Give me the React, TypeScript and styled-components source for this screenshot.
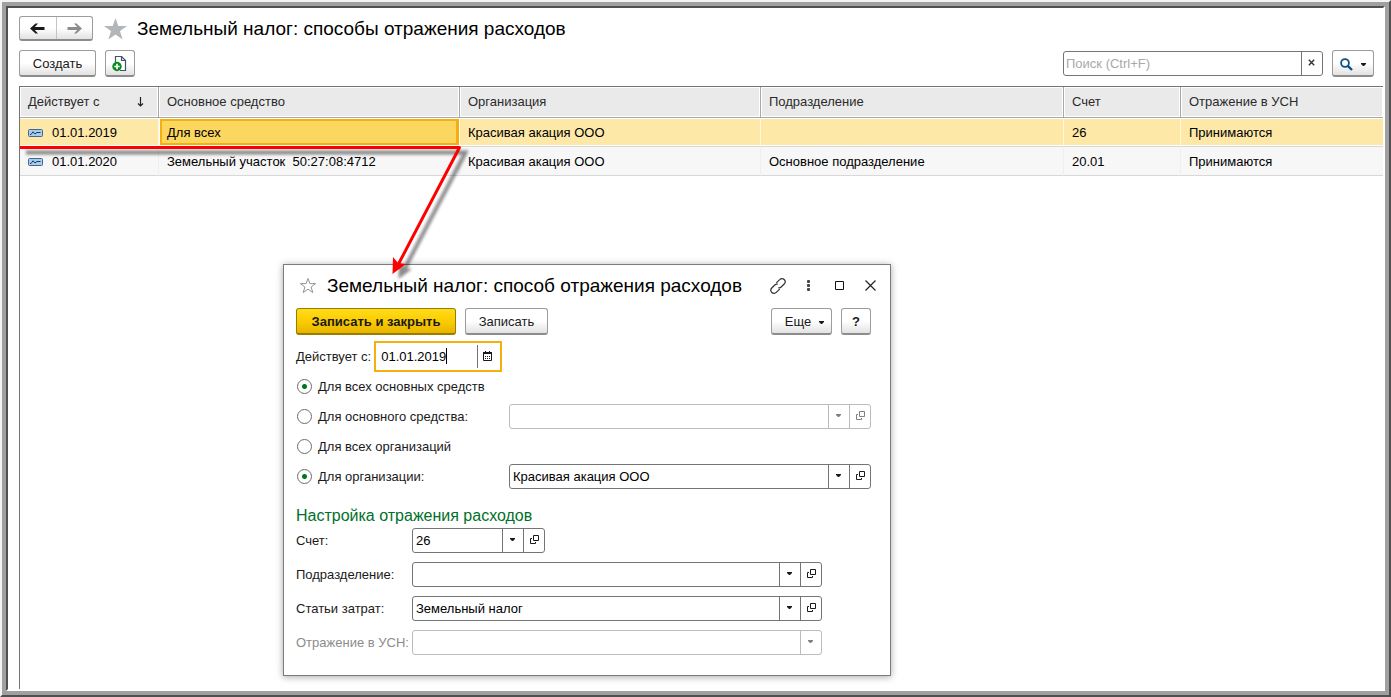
import React, { useState } from "react";
import styled, { createGlobalStyle, css } from "styled-components";

const GlobalStyle = createGlobalStyle`
  *, *::before, *::after { box-sizing: border-box; }
  body { margin: 0; background: #ffffff; }
  body, button, input, table {
    font-family: "Liberation Sans", Arial, sans-serif;
    font-size: 13px;
    line-height: 16px;
    color: #1a1a1a;
  }
  svg { display: block; flex: none; }
`;

/* ---------- window frame ---------- */

const OuterFrame = styled.div`
  min-height: 100vh;
  display: flex;
  border: 2px solid;
  border-color: #f4f4f4 #505050 #505050 #f4f4f4;
`;

const MiddleFrame = styled.div`
  flex: 1;
  min-width: 0;
  display: flex;
  border: 4px solid #a0a0a0;
`;

const Page = styled.main`
  position: relative;
  flex: 1;
  min-width: 0;
  display: flex;
  flex-direction: column;
  padding: 8px 0 0 11px;
  border: 2px solid;
  border-color: #505050 #ffffff #ffffff #505050;
`;

/* ---------- shared controls ---------- */

const Button = styled.button<{
  $width?: number;
  $primary?: boolean;
  $bold?: boolean;
  $menu?: boolean;
}>`
  height: 27px;
  width: ${(p) => (p.$width ? `${p.$width}px` : "auto")};
  flex: none;
  display: flex;
  align-items: center;
  justify-content: center;
  gap: 8px;
  padding: ${(p) => (p.$menu ? "2px 0 0 6px" : "2px 0 0")};
  border: 1px solid #9c9c9c;
  border-bottom: 2px solid #8c8c8c;
  border-radius: 3px;
  background: linear-gradient(#ffffff 50%, #e2e2e2);
  font-weight: ${(p) => (p.$primary || p.$bold ? "bold" : "normal")};
  white-space: nowrap;
  ${(p) =>
    p.$primary &&
    css`
      border-color: #9a7d00;
      background: linear-gradient(#ffdc1c, #fccc00 50%, #e6b400);
    `}
`;

const IconButton = styled.button`
  display: flex;
  align-items: center;
  justify-content: center;
  width: 31px;
  height: 24px;
  padding: 0;
  border: 0;
  background: none;
`;

/* ---------- list form ---------- */

const TitleRow = styled.header`
  display: flex;
  align-items: center;
  height: 25px;
`;

const History = styled.nav`
  display: flex;
  width: 74px;
  height: 25px;
  border: 1px solid #9c9c9c;
  border-bottom: 2px solid #8c8c8c;
  border-radius: 3px;
  background: linear-gradient(#ffffff 50%, #e2e2e2);
`;

const HistoryButton = styled.button`
  flex: 1;
  display: flex;
  align-items: center;
  justify-content: center;
  padding: 0;
  border: 0;
  background: none;

  & + & {
    border-left: 1px solid #c4c4c4;
  }
`;

const FavoriteButton = styled.button`
  display: flex;
  padding: 0;
  border: 0;
  margin: 0 10px 0 11px;
  background: none;
`;

const Heading = styled.h1`
  margin: 0;
  font-size: 19px;
  line-height: 24px;
  font-weight: normal;
  color: #000000;
  white-space: nowrap;
`;

const Toolbar = styled.div`
  display: flex;
  align-items: center;
  gap: 9px;
  padding: 9px 9px 9px 0;
`;

const SearchBox = styled.div`
  display: flex;
  width: 260px;
  height: 25px;
  margin-left: auto;
  border: 1px solid #747474;
  border-radius: 3px;
  background: #ffffff;
`;

const SearchInput = styled.input`
  flex: 1;
  min-width: 0;
  padding: 0 2px;
  border: 0;
  background: none;
  outline: 0;

  &::placeholder {
    color: #a8a8a8;
    opacity: 1;
  }
`;

const ClearButton = styled.button`
  display: flex;
  align-items: center;
  justify-content: center;
  width: 21px;
  padding: 0 1px 2px 0;
  border: 0;
  border-left: 1px solid #747474;
  background: none;
`;

const TableArea = styled.section`
  flex: 1;
  border-top: 1px solid #747474;
  border-left: 1px solid #747474;
`;

const Table = styled.table`
  width: 100%;
  table-layout: fixed;
  border-collapse: separate;
  border-spacing: 0;
`;

const HeadCell = styled.th`
  height: 31px;
  padding: 0 8px;
  border-right: 1px solid #a8a8a8;
  border-bottom: 1px solid #a8a8a8;
  background: #eaeaea;
  box-shadow: inset 0 0 0 1px #ffffff;
  font-weight: normal;
  text-align: left;
  white-space: nowrap;
  color: #2a2a2a;

  &:last-child {
    border-right: 0;
  }
`;

const Sortable = styled.div`
  display: flex;
  align-items: center;
  justify-content: space-between;
  padding-right: 6px;
`;

const Row = styled.tr<{ $selected?: boolean }>`
  background: ${(p) => (p.$selected ? "#fde8a8" : "#f7f7f7")};
`;

const Cell = styled.td<{ $active?: boolean; $selected?: boolean }>`
  height: 29px;
  padding: 2px 8px 0;
  border-right: 1px solid ${(p) => (p.$selected ? "#fff6dc" : "#efefef")};
  border-bottom: 1px solid #d8d8d8;
  white-space: pre;
  color: #000000;
  ${(p) => p.$selected && "box-shadow: inset 0 1px 0 #ffffff, inset 0 -1px 0 #ffffff;"}
  ${(p) =>
    p.$active &&
    css`
      background: #fcd75f;
      border-right-color: #ffffff;
      box-shadow: inset 0 1px 0 #ffffff, inset 0 -1px 0 #ffffff, inset 1px 0 0 #ffffff,
        inset 0 0 0 3px #f5b010;
    `}

  &:last-child {
    border-right: 0;
  }
`;

const DateValue = styled.div`
  display: flex;
  align-items: center;
  gap: 9px;
`;

/* ---------- dialog ---------- */

const Dialog = styled.section`
  position: absolute;
  left: 275px;
  top: 256px;
  width: 608px;
  padding: 0 19px 20px 12px;
  border: 1px solid #7c7c7c;
  background: #ffffff;
  box-shadow: 0 1px 7px rgba(0, 0, 0, 0.35);
`;

const DialogTitleRow = styled.header`
  display: flex;
  align-items: center;
  height: 43px;
  padding: 0 0 2px 3px;
`;

const DialogTitle = styled(Heading).attrs({ as: "h2" })`
  flex: 1;
`;

const StarButton = styled(FavoriteButton)`
  margin: 0 10px 0 0;
`;

const WindowButtons = styled.div`
  display: flex;
  margin-right: -15px;
`;

const Commands = styled.div`
  display: flex;
  gap: 9px;
  margin-bottom: 6px;
`;

const Spacer = styled.span`
  flex: 1;
`;

const DateRow = styled.div`
  display: flex;
  align-items: center;
  gap: 3px;
  margin-bottom: 2px;
`;

const DateField = styled.div`
  position: relative;
  display: flex;
  align-items: center;
  width: 128px;
  height: 31px;
  border: 2px solid #f5b010;
`;

const DateInput = styled.input`
  width: 102px;
  height: 23px;
  padding: 0 0 0 5px;
  border: 0;
  border-right: 1px solid #747474;
  outline: 0;
  background: none;
  color: #000000;
`;

const TextCursor = styled.span`
  position: absolute;
  left: 70px;
  top: 5px;
  width: 1px;
  height: 16px;
  background: #000000;
`;

const CalendarButton = styled.button`
  display: flex;
  padding: 0 0 2px 5px;
  border: 0;
  background: none;
`;

const Options = styled.div`
  display: grid;
  gap: 5px;
`;

const OptionRow = styled.div`
  display: grid;
  grid-template-columns: 213px 1fr;
  align-items: center;
  height: 25px;
`;

const OptionLabel = styled.label`
  display: flex;
  align-items: center;
  gap: 5px;
  white-space: nowrap;
`;

const Radio = styled.input.attrs({ type: "radio" })`
  appearance: none;
  width: 15px;
  height: 15px;
  margin: 0 1px;
  border: 1px solid #6c6c6c;
  border-radius: 50%;
  background: #ffffff;

  &:checked {
    background: radial-gradient(circle, #007420 0 2px, #ffffff 3px);
  }
`;

const GroupTitle = styled.h3`
  margin: 15px 0 0;
  font-size: 16px;
  line-height: 24px;
  font-weight: normal;
  color: #00702a;
`;

const Fields = styled.div`
  display: grid;
  gap: 9px;
`;

const FieldRow = styled.div<{ $disabled?: boolean }>`
  display: grid;
  grid-template-columns: 116px auto;
  justify-content: start;
  align-items: center;
  white-space: nowrap;
  color: ${(p) => (p.$disabled ? "#8c8c8c" : "#1a1a1a")};
`;

const ComboBox = styled.div<{ $width?: number; $disabled?: boolean }>`
  display: flex;
  width: ${(p) => (p.$width ? `${p.$width}px` : "100%")};
  height: 25px;
  border: 1px solid ${(p) => (p.$disabled ? "#bcbcbc" : "#747474")};
  border-radius: 3px;
  color: ${(p) => (p.$disabled ? "#808080" : "#1a1a1a")};
`;

const ComboInput = styled.input`
  flex: 1;
  min-width: 0;
  padding: 0 3px;
  border: 0;
  outline: 0;
  background: none;
  color: #000000;
`;

const ComboButton = styled.button<{ $disabled?: boolean }>`
  display: flex;
  align-items: center;
  justify-content: center;
  width: 21px;
  padding: 0 1px 2px 0;
  border: 0;
  border-left: 1px solid ${(p) => (p.$disabled ? "#bcbcbc" : "#747474")};
  background: none;
  color: inherit;
`;

const OpenButton = styled(ComboButton)`
  padding: 0 0 2px 1px;
`;

const Pointer = styled.svg`
  position: absolute;
  left: 0;
  top: 0;
  pointer-events: none;
`;

/* ---------- icons ---------- */

const BackArrow = ({ color }: { color: string }) => (
  <svg width="15" height="11" viewBox="0 0 15 11" fill={color}>
    <path d="M0 5.500L5.500 .5H8L4.800 4H14.500V7H4.800L8 10.500H5.500Z" />
  </svg>
);

const ForwardArrow = ({ color }: { color: string }) => (
  <svg width="15" height="11" viewBox="0 0 15 11" fill={color}>
    <path d="M15 5.500L9.500 .5H7L10.200 4H.5V7H10.200L7 10.500H9.500Z" />
  </svg>
);

const SolidStar = () => (
  <svg width="23" height="22" viewBox="0 0 23 22" fill="#b3b6b9">
    <path d="M11.5 0L14.3 8H23L16 13.1L18.6 21.6L11.5 16.5L4.4 21.6L7 13.1L0 8H8.7Z" />
  </svg>
);

const OutlineStar = () => (
  <svg width="18" height="17" viewBox="0 0 18 17" fill="none" stroke="#8f949a">
    <path d="M9 1.500L10.9 6.600H16.6L12.1 10L13.8 15.500L9 12.200L4.2 15.500L5.9 10L1.4 6.600H7.1Z" />
  </svg>
);

const NewDocument = () => (
  <svg width="16" height="16" viewBox="0 0 16 16" fill="none">
    <path d="M3.500 7V.5H9.500L13.500 4.500V14.500H8" fill="#fff" stroke="#3f5468" strokeWidth="1.200" />
    <path d="M9.500 .5V4.500H13.500" stroke="#3f5468" strokeWidth="1.200" />
    <circle cx="5" cy="10.500" r="4.700" fill="#0b8a1c" />
    <path d="M5 7.800V13.200M2.300 10.500H7.700" stroke="#fff" strokeWidth="1.600" />
  </svg>
);

const Magnifier = () => (
  <svg width="13" height="13" viewBox="0 0 13 13" fill="none" stroke="#0d4f8b">
    <circle cx="5" cy="5" r="3.900" strokeWidth="1.800" />
    <path d="M7.800 7.800L12 12" strokeWidth="2.400" />
  </svg>
);

const Caret = () => (
  <svg width="5" height="3" viewBox="0 0 5 3" fill="currentColor">
    <path d="M0 0H5V1L3 3H2L0 1Z" />
  </svg>
);

const OpenIcon = () => (
  <svg width="9" height="9" viewBox="0 0 9 9" fill="none" stroke="currentColor">
    <path d="M3.500 .5H8.500V5.500H3.500Z" />
    <path d="M2 3.500H.5V8.500H5.500V7" />
  </svg>
);

const SmallCross = () => (
  <svg width="7" height="7" viewBox="0 0 7 7" stroke="#333" strokeWidth="1.400">
    <path d="M.8 .8L6.200 6.200M6.200 .8L.8 6.200" />
  </svg>
);

const SortArrow = () => (
  <svg width="7" height="10" viewBox="0 0 7 10" fill="none" stroke="#222" strokeWidth="1.200">
    <path d="M3.500 0V9M1 6.500L3.500 9L6 6.500" />
  </svg>
);

const RecordIcon = () => (
  <svg width="15" height="8" viewBox="0 0 15 8" fill="none">
    <rect x=".5" y=".5" width="14" height="7" rx="1" fill="#a8cbee" stroke="#44678c" />
    <path d="M2 5.500H3L5 2.800L7 5L9 3.500H12.500" stroke="#173b66" />
  </svg>
);

const CalendarIcon = () => (
  <svg width="9" height="10" viewBox="0 0 9 10" fill="none">
    <path d="M0 1H9V3H0Z" fill="#1a1a1a" />
    <path d="M.5 3V9.500H8.500V3" stroke="#1a1a1a" />
    <path d="M2.500 0V2M6.500 0V2" stroke="#1a1a1a" />
    <path d="M2 5.500H7M2 7.500H7" stroke="#1a1a1a" strokeDasharray="1 1" />
  </svg>
);

const LinkIcon = () => (
  <svg width="16" height="16" viewBox="0 0 16 16" fill="none" stroke="#333" strokeWidth="1.200" strokeLinecap="round">
    <path d="M6.600 4.600L9.700 1.600A2.900 2.900 0 0 1 14.200 6L11.200 9A2.900 2.900 0 0 1 8.600 9.800" />
    <path d="M9.400 11.400L6.300 14.400A2.900 2.900 0 0 1 1.800 10L4.800 7A2.900 2.900 0 0 1 7.400 6.200" />
  </svg>
);

const DotsIcon = () => (
  <svg width="3" height="11" viewBox="0 0 3 11" fill="#444">
    <rect width="3" height="3" rx="1" />
    <rect y="4" width="3" height="3" rx="1" />
    <rect y="8" width="3" height="3" rx="1" />
  </svg>
);

const MaximizeIcon = () => (
  <svg width="9" height="9" viewBox="0 0 9 9" fill="none" stroke="#111">
    <path d="M.5 .5H8.500V8.500H.5Z" />
  </svg>
);

const CloseIcon = () => (
  <svg width="11" height="11" viewBox="0 0 11 11" stroke="#222" strokeWidth="1.200">
    <path d="M.5 .5L10.500 10.500M10.500 .5L.5 10.500" />
  </svg>
);

/* ---------- composed parts ---------- */

type ComboProps = {
  id?: string;
  label?: string;
  value: string;
  width?: number;
  disabled?: boolean;
  openable?: boolean;
};

function Combo({ id, label, value, width, disabled, openable = true }: ComboProps) {
  return (
    <ComboBox $width={width} $disabled={disabled}>
      <ComboInput id={id} aria-label={label} defaultValue={value} disabled={disabled} />
      <ComboButton type="button" aria-label="Выбрать" $disabled={disabled} disabled={disabled}>
        <Caret />
      </ComboButton>
      {openable && (
        <OpenButton type="button" aria-label="Открыть" $disabled={disabled} disabled={disabled}>
          <OpenIcon />
        </OpenButton>
      )}
    </ComboBox>
  );
}

const columns = [
  { title: "Действует с", width: 139 },
  { title: "Основное средство", width: 301 },
  { title: "Организация", width: 301 },
  { title: "Подразделение", width: 303 },
  { title: "Счет", width: 117 },
  { title: "Отражение в УСН" },
];

const records = [
  ["01.01.2019", "Для всех", "Красивая акация ООО", "", "26", "Принимаются"],
  [
    "01.01.2020",
    "Земельный участок  50:27:08:4712",
    "Красивая акация ООО",
    "Основное подразделение",
    "20.01",
    "Принимаются",
  ],
];

const settings = [
  { id: "account", label: "Счет:", value: "26", width: 133 },
  { id: "department", label: "Подразделение:", value: "", width: 410 },
  { id: "cost", label: "Статьи затрат:", value: "Земельный налог", width: 410 },
  { id: "usn", label: "Отражение в УСН:", value: "", width: 410, disabled: true, openable: false },
];

function RecordDialog() {
  const [asset, setAsset] = useState("all");
  const [company, setCompany] = useState("one");
  return (
    <Dialog role="dialog" aria-labelledby="dialog-title">
      <DialogTitleRow>
        <StarButton type="button" aria-label="В избранное">
          <OutlineStar />
        </StarButton>
        <DialogTitle id="dialog-title">Земельный налог: способ отражения расходов</DialogTitle>
        <WindowButtons>
          <IconButton type="button" aria-label="Ссылка"><LinkIcon /></IconButton>
          <IconButton type="button" aria-label="Меню"><DotsIcon /></IconButton>
          <IconButton type="button" aria-label="Развернуть"><MaximizeIcon /></IconButton>
          <IconButton type="button" aria-label="Закрыть"><CloseIcon /></IconButton>
        </WindowButtons>
      </DialogTitleRow>

      <Commands>
        <Button type="button" $width={160} $primary>Записать и закрыть</Button>
        <Button type="button" $width={83}>Записать</Button>
        <Spacer />
        <Button type="button" $width={61} $menu>Еще <Caret /></Button>
        <Button type="button" $width={30} $bold>?</Button>
      </Commands>

      <DateRow>
        <label htmlFor="valid-from">Действует с:</label>
        <DateField>
          <DateInput id="valid-from" defaultValue="01.01.2019" />
          <TextCursor />
          <CalendarButton type="button" aria-label="Календарь"><CalendarIcon /></CalendarButton>
        </DateField>
      </DateRow>

      <Options>
        <OptionRow>
          <OptionLabel>
            <Radio name="asset" checked={asset === "all"} onChange={() => setAsset("all")} />
            Для всех основных средств
          </OptionLabel>
        </OptionRow>
        <OptionRow>
          <OptionLabel>
            <Radio name="asset" checked={asset === "one"} onChange={() => setAsset("one")} />
            Для основного средства:
          </OptionLabel>
          <Combo label="Основное средство" value="" disabled={asset === "all"} />
        </OptionRow>
        <OptionRow>
          <OptionLabel>
            <Radio name="company" checked={company === "all"} onChange={() => setCompany("all")} />
            Для всех организаций
          </OptionLabel>
        </OptionRow>
        <OptionRow>
          <OptionLabel>
            <Radio name="company" checked={company === "one"} onChange={() => setCompany("one")} />
            Для организации:
          </OptionLabel>
          <Combo label="Организация" value="Красивая акация ООО" disabled={company === "all"} />
        </OptionRow>
      </Options>

      <GroupTitle>Настройка отражения расходов</GroupTitle>
      <Fields>
        {settings.map(({ label, ...field }) => (
          <FieldRow key={field.id} $disabled={field.disabled}>
            <label htmlFor={field.id}>{label}</label>
            <Combo {...field} />
          </FieldRow>
        ))}
      </Fields>
    </Dialog>
  );
}

export default function App() {
  return (
    <>
      <GlobalStyle />
      <OuterFrame>
        <MiddleFrame>
          <Page>
            <TitleRow>
              <History>
                <HistoryButton type="button" aria-label="Назад"><BackArrow color="#1a1a1a" /></HistoryButton>
                <HistoryButton type="button" aria-label="Вперед"><ForwardArrow color="#8c8c8c" /></HistoryButton>
              </History>
              <FavoriteButton type="button" aria-label="В избранное"><SolidStar /></FavoriteButton>
              <Heading>Земельный налог: способы отражения расходов</Heading>
            </TitleRow>

            <Toolbar>
              <Button type="button" $width={77}>Создать</Button>
              <Button type="button" $width={30} aria-label="Создать копированием"><NewDocument /></Button>
              <SearchBox>
                <SearchInput aria-label="Поиск" placeholder="Поиск (Ctrl+F)" />
                <ClearButton type="button" aria-label="Очистить"><SmallCross /></ClearButton>
              </SearchBox>
              <Button type="button" $width={42} aria-label="Найти"><Magnifier /><Caret /></Button>
            </Toolbar>

            <TableArea>
              <Table>
                <colgroup>
                  {columns.map((c) => <col key={c.title} width={c.width} />)}
                </colgroup>
                <thead>
                  <tr>
                    {columns.map((c, i) => (
                      <HeadCell key={c.title} scope="col">
                        {i === 0 ? <Sortable>{c.title}<SortArrow /></Sortable> : c.title}
                      </HeadCell>
                    ))}
                  </tr>
                </thead>
                <tbody>
                  {records.map((record, r) => (
                    <Row key={record[0]} $selected={r === 0}>
                      {record.map((value, c) => (
                        <Cell key={c} $selected={r === 0} $active={r === 0 && c === 1}>
                          {c === 0 ? <DateValue><RecordIcon />{value}</DateValue> : value}
                        </Cell>
                      ))}
                    </Row>
                  ))}
                </tbody>
              </Table>
            </TableArea>

            <RecordDialog />

            <Pointer width="480" height="290" viewBox="8 8 480 290" aria-hidden="true">
              <defs>
                <filter id="soft" x="-5%" y="-5%" width="110%" height="115%">
                  <feGaussianBlur stdDeviation="1.500" />
                </filter>
              </defs>
              <g filter="url(#soft)" opacity="0.45" transform="translate(6 5)">
                <path d="M20 147.500H459.500L398.500 264" fill="none" stroke="#000" strokeWidth="4" />
                <path d="M392.500 274L393 257L398 263L406 264Z" fill="#000" />
              </g>
              <path d="M20 147.500H459.500L398.500 264" fill="none" stroke="#f00" strokeWidth="3" strokeLinejoin="round" />
              <path d="M392.500 274L393 257L398 263L406 264Z" fill="#f00" />
            </Pointer>
          </Page>
        </MiddleFrame>
      </OuterFrame>
    </>
  );
}
